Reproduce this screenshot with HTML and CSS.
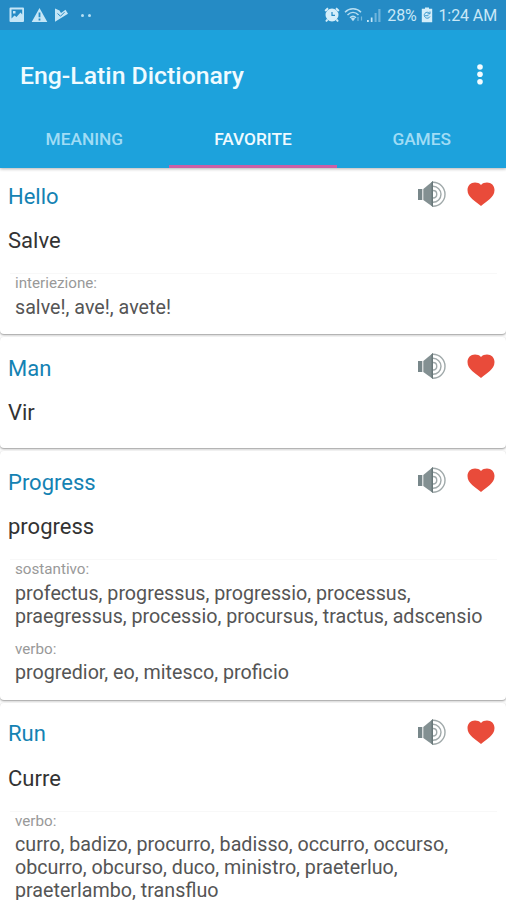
FILE: index.html
```
<!DOCTYPE html>
<html lang="en">
<head>
<meta charset="utf-8">
<title>Eng-Latin Dictionary</title>
<link rel="stylesheet" href="styles.css">
</head>
<body>
<svg class="defs" width="0" height="0" aria-hidden="true">
  <symbol id="speaker" viewBox="0 0 30 28">
    <path d="M1 9h4.300v11H1z" fill="#78878a"/>
    <path d="M6.300 9 16 1v26L6.300 20z" fill="#839092"/>
    <path d="M14.500 2.200 16 1v26l-1.500-1.200z" fill="#687779"/>
    <g fill="none" stroke="#a0a9aa" stroke-width="1.400">
      <path d="M16 10.500c5 0 5 7.500 0 7.500"/>
      <path d="M16 6.300a8 8 0 0 1 0 16"/>
      <path d="M16 2.200a12 12 0 0 1 0 24"/>
    </g>
  </symbol>
  <symbol id="heart" viewBox="0 0 28 26">
    <path d="M14 4C15.500 2.200 17.700 1.500 20 1.500c4.300 0 7.500 3.100 7.500 7.500 0 7.500-8 11-13.500 16C8.500 20 .5 16.500.5 9 .5 4.600 3.700 1.500 8 1.500c2.300 0 4.500.7 6 2.500z" fill="#e94b3a"/>
  </symbol>
</svg>
<header class="appbar">
  <div class="status">
    <div class="status-left">
      <svg width="16" height="16" viewBox="0 0 16 16"><path fill-rule="evenodd" d="M1.500.5h12.500a1 1 0 0 1 1 1V14a1 1 0 0 1-1 1H1.500a1 1 0 0 1-1-1V1.500a1 1 0 0 1 1-1zM2.500 2.500v9l3-3 2 1.500 4-4.500 1.700 2V2.500zM4 4h2.500v2.500H4z" fill="#c5e6f7"/></svg>
      <svg width="17" height="16" viewBox="0 0 17 16"><path fill-rule="evenodd" d="M8.500 1 16.300 15H.7zM7.600 5.500v4.800h1.800V5.500zM7.600 11.500v2h1.800v-2z" fill="#c5e6f7"/></svg>
      <svg width="15" height="16" viewBox="0 0 15 16"><path d="M1 1.500 5.500 3.500 7 6l4.500-3.300 2.500 4L1 14.800z" fill="#c5e6f7"/><path d="m3.500 6.500 3 2.700 4-4" fill="none" stroke="#258bc5" stroke-width="1"/></svg>
      <span class="dots"><i></i><i></i></span>
    </div>
    <div class="status-right">
      <svg width="16" height="16" viewBox="0 0 16 16"><path d="M1.200 4 4 1.300M14.800 4 12 1.300M3.500 12.500 2 14.500M12.500 12.500l1.500 2" stroke="#d4eefa" stroke-width="2"/><circle cx="8" cy="8" r="6.500" fill="#d4eefa"/><path d="M8 5V8.300h3" fill="none" stroke="#258bc5" stroke-width="1.200"/></svg>
      <svg class="wifi" width="20" height="16" viewBox="0 0 20 16"><g fill="none" stroke="#b8def2" stroke-width="1.500"><path d="M1 5.200c4.500-4.500 11.500-4.500 16 0M3.500 8c3.300-3.200 7.700-3.200 11 0M6 10.700c2-1.800 4-1.800 6 0"/></g><path d="m6.800 11.500 2.200 2.700 2.200-2.700c-1.400-1-3-1-4.400 0z" fill="#b8def2"/><path d="M14 10v4M17.500 9.500v4" stroke="#75b9df" stroke-width="1.200"/></svg>
      <svg class="signal" width="16" height="16" viewBox="0 0 16 16"><path d="M1 13h1.800v2H1zM4.800 10.500h1.700V15H4.800z" fill="#c5e6f7"/><path d="M8.600 6h2v9h-2zM12.300 2h2.200v13h-2.200z" fill="#6fb4dc"/></svg>
      <span class="battery-text">28%</span>
      <svg class="battery" width="12" height="16" viewBox="0 0 12 16"><path d="M4 .5h4v1.300h3.200V15.300H.8V1.800H4z" fill="#d4eefa"/><path d="M8.500 6.200A3 3 0 1 0 9 9.500M9 4.500v2.300H6.500M4 8.700h3.500" fill="none" stroke="#2c8fc7" stroke-width=".9"/></svg>
      <span class="time">1:24 AM</span>
    </div>
  </div>
  <div class="toolbar">
    <h1>Eng-Latin Dictionary</h1>
    <svg width="8" height="24" viewBox="0 0 8 24"><g fill="#f3fcff"><circle cx="4" cy="4" r="2.800"/><circle cx="4" cy="11.300" r="2.800"/><circle cx="4" cy="18.700" r="2.800"/></g></svg>
  </div>
  <nav class="tabs">
    <span class="tab">MEANING</span>
    <span class="tab active">FAVORITE</span>
    <span class="tab">GAMES</span>
  </nav>
</header>
<main class="list">
  <article class="card">
    <div class="head"><h2>Hello</h2><svg class="speaker"><use href="#speaker"/></svg><svg class="heart"><use href="#heart"/></svg></div>
    <p class="translation">Salve</p>
    <dl><dt>interiezione:</dt><dd>salve!, ave!, avete!</dd></dl>
  </article>
  <article class="card">
    <div class="head"><h2>Man</h2><svg class="speaker"><use href="#speaker"/></svg><svg class="heart"><use href="#heart"/></svg></div>
    <p class="translation">Vir</p>
  </article>
  <article class="card">
    <div class="head"><h2>Progress</h2><svg class="speaker"><use href="#speaker"/></svg><svg class="heart"><use href="#heart"/></svg></div>
    <p class="translation">progress</p>
    <dl><dt>sostantivo:</dt><dd>profectus, progressus, progressio, processus,<br>praegressus, processio, procursus, tractus, adscensio</dd><dt>verbo:</dt><dd>progredior, eo, mitesco, proficio</dd></dl>
  </article>
  <article class="card">
    <div class="head"><h2>Run</h2><svg class="speaker"><use href="#speaker"/></svg><svg class="heart"><use href="#heart"/></svg></div>
    <p class="translation">Curre</p>
    <dl><dt>verbo:</dt><dd>curro, badizo, procurro, badisso, occurro, occurso,<br>obcurro, obcurso, duco, ministro, praeterluo,<br>praeterlambo, transfluo</dd></dl>
  </article>
</main>
</body>
</html>
```
FILE: styles.css
```
* { box-sizing: border-box; margin: 0; padding: 0; }
body {
  height: 900px;
  overflow: hidden;
  display: flex;
  flex-direction: column;
  background: #fafafa;
  font-family: Roboto, "Liberation Sans", sans-serif;
}
.defs { display: none; }
.appbar {
  flex: none;
  height: 168px;
  background: #1da2dc;
  box-shadow: 0 1px 3px rgba(0, 0, 0, .3);
  z-index: 1;
}
.status {
  height: 30px;
  padding: 0 9px;
  display: flex;
  justify-content: space-between;
  align-items: center;
  background: #258bc5;
  color: #c9e8f7;
}
.status-left, .status-right { display: flex; align-items: center; }
.status-left { gap: 6px; }
.status-left svg { flex: none; }
.dots { display: flex; gap: 4px; margin-left: 6px; }
.dots i { width: 3px; height: 3px; border-radius: 50%; background: #b5dff3; }
.wifi { margin-left: 4px; }
.signal { margin-left: 2px; }
.battery-text { margin-left: 5px; font-size: 16px; line-height: 30px; padding-top: 2px; letter-spacing: -.2px; }
.battery { margin-left: 5px; }
.time { margin-left: 5px; font-size: 16px; line-height: 30px; padding-top: 2px; letter-spacing: -.1px; }
.toolbar {
  height: 90px;
  padding: 0 22px 0 20px;
  display: flex;
  align-items: center;
  justify-content: space-between;
}
h1 { font-size: 24.8px; font-weight: 500; color: #f0fbff; line-height: 28px; padding-top: 1px; }
.tabs { height: 48px; display: grid; grid-template-columns: repeat(3, 1fr); }
.tab {
  font-size: 17.3px;
  font-weight: 500;
  line-height: 38px;
  text-align: center;
  color: #a0dcf5;
  border-bottom: 3px solid transparent;
}
.tab.active { color: #effaff; border-color: #cc5fa5; }
.list { display: flex; flex-direction: column; gap: 3px; margin-top: -3px; }
.card {
  flex: none;
  padding-bottom: 15.5px;
  background: #fff;
  border-radius: 4px;
  box-shadow: 0 1px 2px rgba(0, 0, 0, .38);
}
.head { display: flex; align-items: center; height: 58px; padding: 0 11px 0 8px; }
h2 { flex: 1; font-size: 22px; font-weight: 400; color: #1482b3; line-height: 28px; padding-top: 5px; }
.speaker { width: 30px; height: 28px; }
.heart { width: 28px; height: 26px; margin-left: 20px; }
.translation { height: 50px; padding-left: 8px; font-size: 22px; line-height: 36px; color: #333; }
.translation:last-child { height: 37.5px; }
dl { margin: 0 9px 0 10px; padding-left: 5px; border-top: 1px solid #f8f8f8; }
dt { font-size: 15.2px; line-height: 18px; color: #999; }
dd { padding-top: 3.5px; font-size: 19.7px; line-height: 23px; color: #555; white-space: nowrap; }
dd + dt { margin-top: 12px; }
```
